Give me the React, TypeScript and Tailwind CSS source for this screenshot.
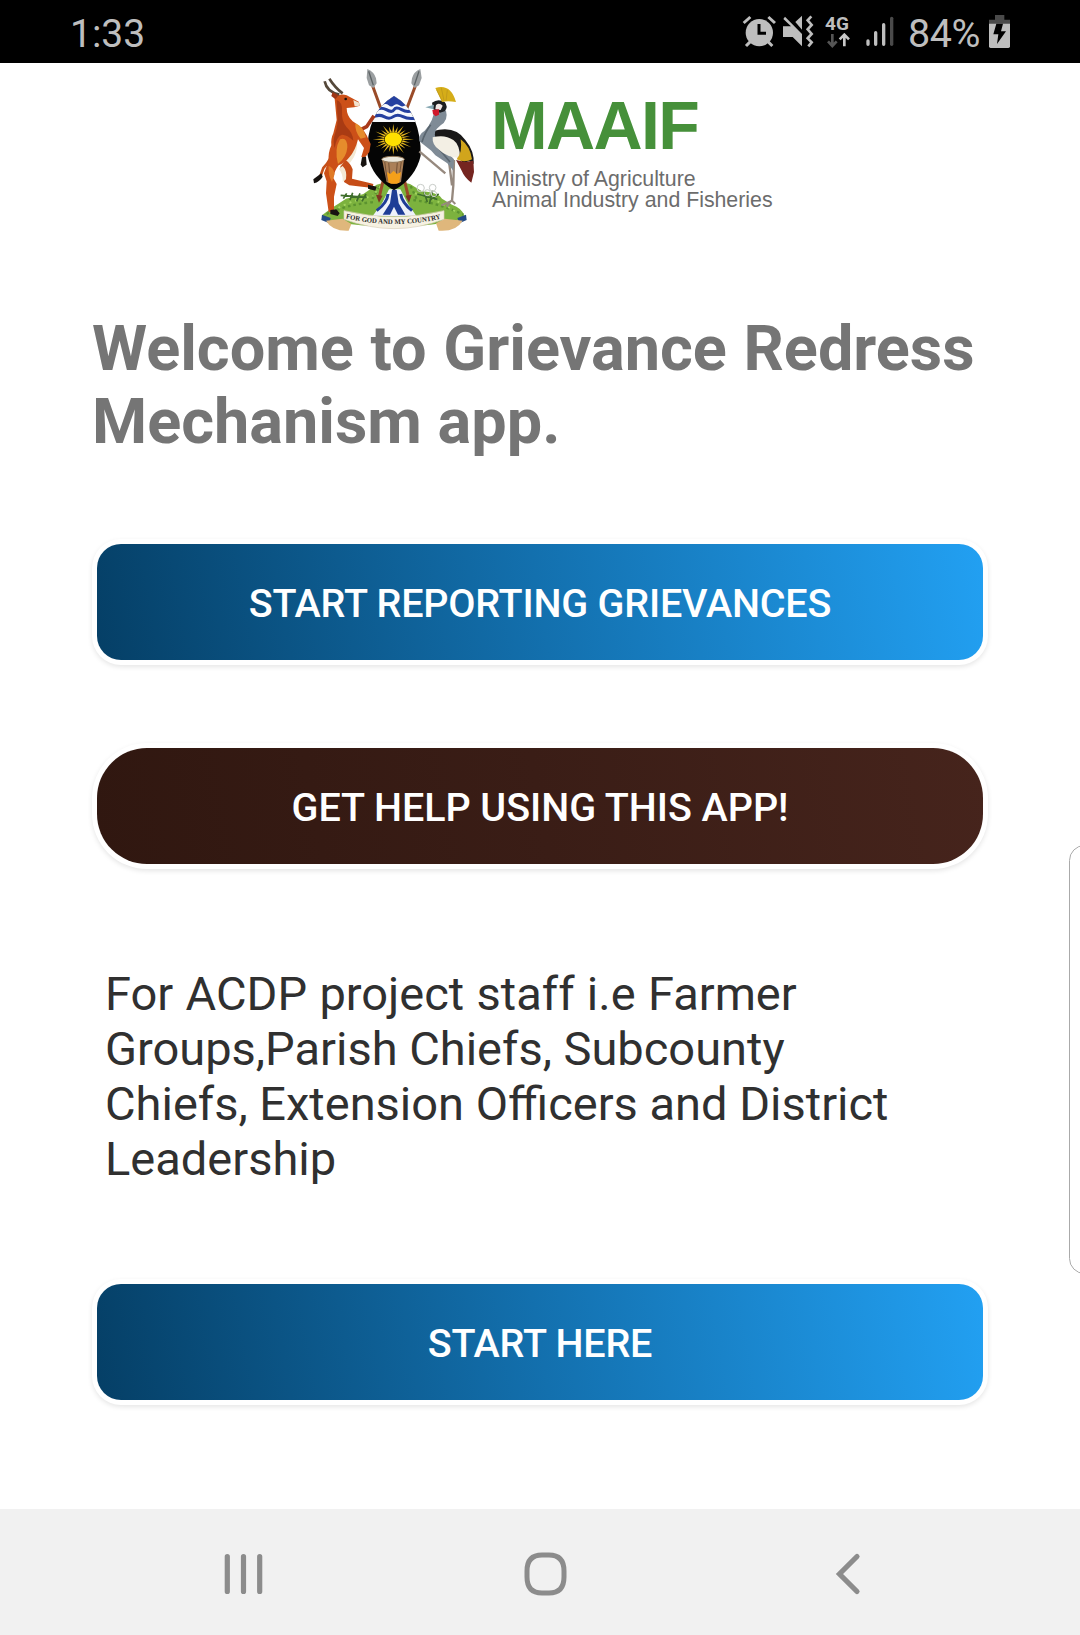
import React from "react";

function AlarmIcon() {
  return (
    <svg className="h-[33px] w-[34px]" viewBox="36 45 102 99" fill="#bebebe">
      <circle cx="88" cy="98" r="41" />
      <g stroke="#bebebe" strokeWidth="9">
        <path d="M41 69 61 51M115 51l20 18" />
        <path d="M48 138l16-16M127 138l-16-16" />
      </g>
      <path d="M87 72v28h21" fill="none" stroke="#000" strokeWidth="9" />
    </svg>
  );
}

function MuteVibrateIcon() {
  return (
    <svg className="h-[33px] w-[34px]" viewBox="156 45 102 99" fill="#bebebe">
      <path d="M196 66l20-19v42z" />
      <path d="M162 51l56 56" stroke="#000" strokeWidth="12" />
      <path d="M165 50l51 52v37L188 111h-29V79h24L160 57z" />
      <path d="M244 49l-11 12 12 14-12 13 12 14-12 13 12 12-10 12" fill="none" stroke="#bebebe" strokeWidth="8" />
    </svg>
  );
}

function DataArrows() {
  return (
    <svg className="h-[15px] w-[24px]" viewBox="290 99 72 45" fill="none" strokeWidth="8">
      <path d="M309 102v37M296 124l13 14 13-14" stroke="#555" />
      <path d="M345 139v-36M331 118l14-14 14 14" stroke="#c8c8c8" />
    </svg>
  );
}

function SignalIcon() {
  return (
    <svg className="h-[31px] w-[28px]" viewBox="410 48 84 93" strokeWidth="10" strokeLinecap="round">
      <path d="M416 123v10M439 98v35M463 74v59" stroke="#bebebe" />
      <path d="M487 55v78" stroke="#4a4a4a" />
    </svg>
  );
}

function BatteryIcon() {
  return (
    <svg className="h-[33px] w-[21px]" viewBox="777 45 63 99">
      <path d="M795 45h28v14h17v14h-63V59h18z" fill="#4a4a4a" />
      <path d="M777 71h63v68q0 5-5 5h-53q-5 0-5-5z" fill="#bebebe" />
      <path d="M799 71h20l-6 23h15l-27 38 4-29h-15z" fill="#000" />
    </svg>
  );
}

function StatusBar() {
  return (
    <header className="flex h-[63px] shrink-0 items-start bg-black pt-[15px] text-[#bebebe]">
      <span className="ml-[70px] mt-[-4px] text-[39px] leading-[46px]">1:33</span>
      <div className="ml-auto flex items-start">
        <AlarmIcon />
        <span className="ml-[6px]"><MuteVibrateIcon /></span>
        <div className="ml-[9px] flex w-[26px] flex-col">
          <span className="h-[18px] text-[19px] font-bold leading-[17px]">4G</span>
          <span className="ml-[1px]"><DataArrows /></span>
        </div>
        <span className="ml-[15px] mt-[1px]"><SignalIcon /></span>
        <span className="ml-[14px] mt-[-4px] w-[76px] text-[39.5px] leading-[46px] tracking-[-0.4px]">84%</span>
        <span className="ml-[5px] mr-[70px]"><BatteryIcon /></span>
      </div>
    </header>
  );
}

const SHIELD =
  "M282 108q44 26 61 69 21 53 19 110-15 66-80 104-65-38-79-104-4-61 17-110 18-42 62-69z";

function CoatOfArms() {
  const rays = Array.from({ length: 24 }, (_, i) => {
    const a = (i * Math.PI) / 12;
    const tip = i % 2 ? 52 : 62;
    const p = (t: number, d: number) =>
      `${(280 + Math.cos(t) * d).toFixed(1)},${(238 + Math.sin(t) * d * 0.76).toFixed(1)}`;
    return `${p(a - 0.12, 28)} ${p(a, tip)} ${p(a + 0.12, 28)}`;
  });
  return (
    <svg className="h-[177px] w-[190px] shrink-0" viewBox="0 9 570 531">
      <clipPath id="shield"><path d={SHIELD} /></clipPath>
      {/* mound */}
      <path d="M66 466q28-22 48-34l24-16q30-6 52-14l40-28q50-18 100-2l36 22q46 2 60 22l30 18q30 10 38 34l-10 12q-100 20-200 20T76 482z" fill="#7cb23e" />
      <g fill="none" stroke="#5c9330" strokeWidth="7" strokeDasharray="8 9">
        <path d="M80 462q60-28 140-36M340 420q80 10 150 44M238 380l-24 42M332 378l20 44" />
      </g>
      <g fill="none" stroke="#a2d45e" strokeWidth="6" strokeDasharray="6 12">
        <path d="M100 452q50-30 120-44M345 400q60 14 120 54M226 398l18-22" />
      </g>
      <g stroke="#3f6e2c" strokeWidth="5" fill="none">
        <path d="M122 406l78 6M140 400l-10 16M158 398l-8 22M180 400l-10 24M198 402l-12 22M352 402l60 16M372 396l10 30M398 392l-10 40M416 402l-28 20" />
      </g>
      <g fill="none" stroke="#c8ccc8" strokeWidth="3">
        <circle cx="362" cy="384" r="11" /><circle cx="398" cy="383" r="10" /><circle cx="382" cy="398" r="9" /><circle cx="402" cy="402" r="8" />
      </g>
      {/* river */}
      <path d="M267 388h34l22 42 26 38H218l28-38z" fill="#eef2fa" />
      <path d="M276 390h14l6 40 20 34h-22l-12-24-12 24h-22l22-34z" fill="#1e3d96" />
      <path d="M264 402q-2 26-34 50M302 402q4 26 34 50" stroke="#1e3d96" strokeWidth="9" fill="none" />
      {/* spears */}
      <g stroke="#9a4b28" strokeWidth="9" fill="none">
        <path d="M218 78l24 66M346 78l-25 66M249 364l-12 50M314 364l12 50" />
      </g>
      <path d="M237 428l-9-24 20 3zM327 428l-11-21 19-3z" fill="#7c3420" />
      <path d="M202 27q20 8 26 28l2 15-10 14-13-8-7-22zM361 27q-20 8-25 28l-2 15 10 14 13-8 8-22z" fill="#9b9fa1" />
      <path d="M206 34l14 42M357 34l-14 42" stroke="#5d6365" strokeWidth="4" />
      {/* shield */}
      <path d={SHIELD} fill="#050505" />
      <g clipPath="url(#shield)">
        <path d="M200 100h164v86H200z" fill="#f6f8fc" />
        <path d="M282 104q20 13 36 31-12 8-20 1t-16 0-16 0-20-1q16-18 36-31z" fill="#2540a0" />
        <g fill="none" stroke="#2540a0" strokeWidth="9">
          <path d="M225 151q17-12 34-2t23 0 23 0 34 2" />
          <path d="M214 173q22-12 38-3t28 0 29 0 44 3" />
        </g>
      </g>
      <g fill="#e6b820">{rays.map((r) => <polygon key={r} points={r} />)}</g>
      <ellipse cx="280" cy="238" rx="26" ry="21" fill="#ffe000" />
      <path d="M246 298h66l-9 68q-22 10-43 0z" fill="#ab8058" />
      <path d="M254 304l8 60M266 306l5 62M304 304l-8 60M292 306l-5 62" stroke="#735134" strokeWidth="3" />
      <path d="M261 336l10 6 10-10 10 10 12-6-5 32q-16 7-32 0z" fill="#f5a01a" />
      <ellipse cx="279" cy="298" rx="34" ry="9" fill="#ece8dc" stroke="#8f7352" strokeWidth="3" />
      {/* antelope */}
      <path d="M100 268q-8 36-30 56l-10 28" stroke="#c4501a" strokeWidth="8" fill="none" />
      <path d="M64 340l-24 18 2 12q16-4 26-20z" fill="#171310" />
      <path d="M172 214l28-14 22-33" stroke="#a93a1a" strokeWidth="11" fill="none" />
      <path d="M172 240q2 40-20 66l-30 26q-8-12 8-30 22-30 42-62z" fill="#f3e9d4" />
      <path d="M136 300q16 10 22 28l-2 28 50 12 14 4-2 12-70-8-16-10q10-30-12-44z" fill="#c64d17" />
      <path d="M128 318q14 14 10 40l-10 8q2-26-12-40z" fill="#f3e9d4" />
      <path d="M104 116q14-18 36-10l36 19 4 12-18 5-22 2q0 24 18 40 30 18 42 42l12 26-4 24-16 20-8-6 8-26-18-26q-8 34-26 54-14 18-32 24-14 18-16 38l10 18-8 38 0 46-16 0-8-56 2-36-8-24 14-38q-2-24 8-46-2-20 6-36l10-40z" fill="#cc5018" />
      <path d="M110 120q18 6 16 34-2 30 14 48 18 16 20 40-18-18-34-18-16 4-22 40-6-20 0-40 12-30 8-64z" fill="#9e3412" opacity=".75" />
      <path d="M120 238q22-8 22 24-2 30-28 50-12-44 6-74zM166 190q24 8 32 42l-16 4q-18-20-16-46z" fill="#e68c2c" />
      <path d="M86 318q14 4 18 24l-8 24q-12-20-10-48z" fill="#e07a26" />
      <path d="M160 120l18 8 2 9-16 2z" fill="#f1e3cf" /><circle cx="137" cy="117" r="4" fill="#18110c" />
      <path d="M186 292l12-2 2 24-12 8-6-8zM204 374l26 6-4 12-22-6zM91 450l18-2 10 12-6 8-22-6z" fill="#171310" />
      <g fill="none" stroke="#55483a" strokeWidth="8"><path d="M118 104Q80 96 74 64M128 100Q106 84 88 56" /></g>
      <path d="M106 118l-12-10 4-12 18 10z" fill="#9e3515" />
      {/* crane */}
      <path d="M358 274l78 66M462 300l-2 76-4 46M446 296l10 80" fill="none" stroke="#96897e" strokeWidth="7" />
      <path d="M424 436l32-14 10 10M440 440l14-18" fill="none" stroke="#96897e" strokeWidth="6" />
      <path d="M398 214q66-20 98 26 28 34 25 72l-12-8-20 4-40-40-46-30z" fill="#191818" />
      <path d="M468 300l28 6 24-4 2 34-8 32q-20-14-30-38z" fill="#752520" />
      <path d="M402 150q18-12 36 2 8 28-16 44-26 20-14 40 18 24 54 62l-2 34-18-22-36-24-12-14-36-28q-4-20 16-32 28-30 28-62z" fill="#7f8b96" />
      <path d="M392 194q-18 24-26 52M408 256l42 50" fill="none" stroke="#59656f" strokeWidth="5" />
      <path d="M398 232q36-10 62 8 20 14 20 54-40-2-62-24-22-14-20-38z" fill="#f3efe4" />
      <path d="M482 238q28 20 34 60-22 12-46 0 18-20 12-60z" fill="#d1a51c" />
      <path d="M396 128q18-14 38-2 12 14 0 28l-14 4-20-10z" fill="#1c1e21" />
      <path d="M402 134l-26 8 24 6z" fill="#86a7b2" />
      <path d="M408 135q10-8 20 2l-6 13-16-2z" fill="#f2e7e4" /><path d="M397 150l20-2v16l-10 5-8-7z" fill="#d1172a" />
      <path d="M406 84q46-14 62 42-26-4-42 0z" fill="#d5ad18" /><path d="M410 90l17 34M424 84l8 38M442 90l-4 32" stroke="#b8921a" strokeWidth="2" />
      {/* scroll */}
      <path d="M66 464l26 10-4 16-24-10zM498 464l-26 10 6 16 22-10z" fill="#244b86" />
      <path d="M78 482l50-6 26 16-8 20q-50 2-68-30zM488 482l-54-6-26 14 8 22q52 4 72-30z" fill="#dfb77c" />
      <path d="M132 452q150 36 300 0v26q-76 28-150 28t-150-28z" fill="#f6f1e2" stroke="#d8cfb8" strokeWidth="2" />
      <path id="motto" d="M137 475q146 34 291 0" fill="none" />
      <text fontFamily="Liberation Serif, serif" fontSize="21" fontWeight="700" fill="#2b2b2b">
        <textPath href="#motto" textLength="288" lengthAdjust="spacingAndGlyphs">FOR GOD AND MY COUNTRY</textPath>
      </text>
    </svg>
  );
}

function Brand() {
  return (
    <section className="flex h-[177px] shrink-0 pl-[300px]">
      <CoatOfArms />
      <div className="flex flex-col pt-[27px] [font-family:'Liberation_Sans',Arial,sans-serif]">
        <span className="ml-[1px] whitespace-nowrap text-[68px] font-bold leading-[70px] tracking-[-1.6px] text-[#46903a]">MAAIF</span>
        <p className="ml-[2px] mt-[9px] whitespace-nowrap text-[21.3px] leading-[21px] text-[#6c6c6c]">
          Ministry of Agriculture<br />Animal Industry and Fisheries
        </p>
      </div>
    </section>
  );
}

const blue = "rounded-[24px] tracking-[-0.2px] bg-[linear-gradient(80deg,#053f66_0%,#1370ae_50%,#22a0f2_100%)]";
const brown = "rounded-[50px] tracking-[-0.05px] bg-[linear-gradient(80deg,#301710_0%,#3a1d16_50%,#46241c_100%)]";

function ActionButton({ label, tone, frame }: { label: string; tone: string; frame: string }) {
  return (
    <div className={`bg-white p-[5px] shadow-[0_2px_5px_rgba(0,0,0,0.1)] ${frame}`}>
      <button className={`block h-[116px] w-full pt-[3px] text-[39.5px] font-medium text-white ${tone}`}>{label}</button>
    </div>
  );
}

function NavBar() {
  return (
    <nav className="flex h-[126px] shrink-0 items-center bg-[#f1f1f1] pl-[222px] pt-[3px] text-[#8c8c8c]">
      <svg className="h-[44px] w-[44px]" viewBox="0 0 44 44" stroke="currentColor" strokeWidth="5.2" strokeLinecap="round">
        <path d="M5.3 4.5v35M21.5 4.5v35M37.7 4.5v35" />
      </svg>
      <svg className="ml-[257px] h-[44px] w-[44px]" viewBox="0 0 44 44" fill="none" stroke="currentColor" strokeWidth="5">
        <path d="M19 3H26Q41 3 41 19V25Q41 41 26 41H19Q4 41 4 25V19Q4 3 19 3Z" />
      </svg>
      <svg className="ml-[268px] h-[44px] w-[28px]" viewBox="0 0 28 44" fill="none" stroke="currentColor" strokeWidth="5.2" strokeLinecap="round">
        <path d="M22 4.5 4.5 22 22 39.5" />
      </svg>
    </nav>
  );
}

export default function App() {
  return (
    <div className="relative flex h-[1635px] w-[1080px] flex-col overflow-hidden bg-white [font-family:Roboto,sans-serif]">
      <StatusBar />
      <Brand />
      <main className="flex flex-1 flex-col px-[92px]">
        <h1 className="mt-[72px] whitespace-nowrap text-[63px] font-bold leading-[73px] text-[#757575]">
          <span className="[word-spacing:1px]">Welcome to Grievance Redress</span><br />Mechanism app.
        </h1>
        <div className="mt-[81px]">
          <ActionButton label="START REPORTING GRIEVANCES" tone={blue} frame="rounded-[29px]" />
        </div>
        <div className="mt-[78px]">
          <ActionButton label="GET HELP USING THIS APP!" tone={brown} frame="rounded-[55px]" />
        </div>
        <p className="ml-[13px] mt-[97px] whitespace-nowrap text-[47px] leading-[55px] text-[#303030]">
          <span className="[word-spacing:0.7px]">For ACDP project staff i.e Farmer</span><br />Groups,Parish Chiefs, Subcounty<br />Chiefs, Extension Officers and District<br />Leadership
        </p>
        <div className="mt-[93px]">
          <ActionButton label="START HERE" tone={blue} frame="rounded-[29px]" />
        </div>
      </main>
      <NavBar />
      <div className="absolute right-[-20px] top-[845px] h-[429px] w-[31px] rounded-[16px] border-[1.5px] border-[#aaa] bg-white" />
    </div>
  );
}
